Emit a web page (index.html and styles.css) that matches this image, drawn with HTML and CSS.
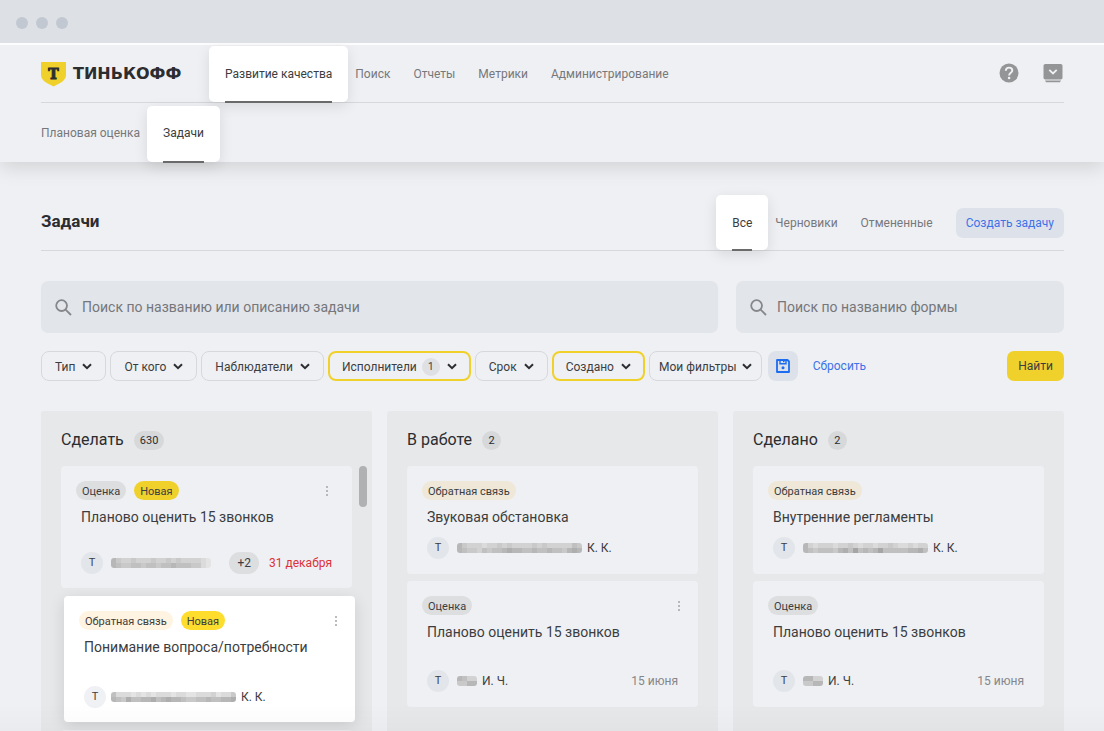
FILE: index.html
```html
<!DOCTYPE html>
<html lang="ru">
<head>
<meta charset="utf-8">
<title>Задачи</title>
<link rel="stylesheet" href="styles.css">
</head>
<body>
<svg class="sprite" aria-hidden="true">
  <symbol id="chevron" viewBox="0 0 10 7"><path d="M1 1.2 5 5.2 9 1.2" fill="none" stroke="currentColor" stroke-width="2"/></symbol>
  <symbol id="search" viewBox="0 0 17 17"><circle cx="6.6" cy="6.6" r="5.4" fill="none" stroke="currentColor" stroke-width="1.8"/><path d="M10.6 10.6 16 16" stroke="currentColor" stroke-width="1.8"/></symbol>
  <symbol id="more" viewBox="0 0 4 12"><g fill="currentColor"><circle cx="2" cy="2" r="1"/><circle cx="2" cy="6" r="1"/><circle cx="2" cy="10" r="1"/></g></symbol>
</svg>
<div class="window-bar"><span class="dot"></span><span class="dot"></span><span class="dot"></span></div>
<header class="header">
  <div class="header-row">
    <a class="logo" href="#">
      <svg class="shield" width="25" height="26" viewBox="0 0 25 26" aria-hidden="true"><path d="M0 1H25V14C25 19 20.5 21.500 12.500 25.500 4.500 21.500 0 19 0 14Z" fill="#f0d12c"/><text class="shield-letter" x="12.500" y="17.500" text-anchor="middle">Т</text></svg>
      <span class="logo-name">ТИНЬКОФФ</span>
    </a>
    <nav class="nav">
      <a class="tab tab-active" href="#">Развитие качества</a>
      <a class="tab" href="#">Поиск</a>
      <a class="tab" href="#">Отчеты</a>
      <a class="tab" href="#">Метрики</a>
      <a class="tab" href="#">Администрирование</a>
    </nav>
    <div class="header-actions">
      <button class="icon-button" type="button" aria-label="Помощь"><svg width="20" height="20" viewBox="0 0 20 20"><circle cx="10" cy="10" r="9.500" fill="#949596"/><path d="M6.800 7.800C6.900 5.700 8.300 4.600 10.100 4.600 12 4.600 13.300 5.800 13.300 7.400 13.300 9.700 10.100 9.800 10.100 12.400" fill="none" stroke="#f0f1f3" stroke-width="1.900"/><circle cx="10.100" cy="15" r="1.300" fill="#f0f1f3"/></svg></button>
      <button class="icon-button" type="button" aria-label="Меню"><svg width="20" height="20" viewBox="0 0 20 20"><rect x=".5" y="1" width="19" height="15.500" rx="1.800" fill="#949596"/><path d="M2 17.500H18L17 19.200H3Z" fill="#949596"/><path d="M6.300 6.900 10 10.500 13.700 6.900" fill="none" stroke="#f0f1f3" stroke-width="1.800"/></svg></button>
    </div>
  </div>
  <nav class="nav subnav">
    <a class="tab" href="#">Плановая оценка</a>
    <a class="tab tab-active" href="#">Задачи</a>
  </nav>
</header>
<main class="main">
  <div class="title-row">
    <h1 class="title">Задачи</h1>
    <nav class="nav">
      <a class="tab tab-active" href="#">Все</a>
      <a class="tab" href="#">Черновики</a>
      <a class="tab" href="#">Отмененные</a>
    </nav>
    <button class="button button-soft" type="button">Создать задачу</button>
  </div>
  <form class="search-row">
    <label class="search"><svg width="17" height="17"><use href="#search"/></svg><input type="text" aria-label="Поиск по названию или описанию задачи" placeholder="Поиск по названию или описанию задачи"></label>
    <label class="search"><svg width="17" height="17"><use href="#search"/></svg><input type="text" aria-label="Поиск по названию формы" placeholder="Поиск по названию формы"></label>
  </form>
  <div class="filters">
    <button class="filter" type="button">Тип<svg class="chevron"><use href="#chevron"/></svg></button>
    <button class="filter" type="button">От кого<svg class="chevron"><use href="#chevron"/></svg></button>
    <button class="filter" type="button">Наблюдатели<svg class="chevron"><use href="#chevron"/></svg></button>
    <button class="filter filter-set" type="button">Исполнители<span class="filter-count">1</span><svg class="chevron"><use href="#chevron"/></svg></button>
    <button class="filter" type="button">Срок<svg class="chevron"><use href="#chevron"/></svg></button>
    <button class="filter filter-set" type="button">Создано<svg class="chevron"><use href="#chevron"/></svg></button>
    <button class="filter filter-own" type="button">Мои фильтры<svg class="chevron"><use href="#chevron"/></svg></button>
    <button class="save" type="button" aria-label="Сохранить фильтр"><svg width="14" height="14" viewBox="0 0 14 14"><path d="M1 1H11.500L13 2.500V13H1Z" fill="none" stroke="#1b6cf0" stroke-width="1.800" stroke-linejoin="round"/><path d="M4 1V4.800H10V1" fill="none" stroke="#1b6cf0" stroke-width="1.400"/><rect x="7" y="1" width="1.500" height="2.200" fill="#1b6cf0"/><circle cx="7" cy="8.800" r="1.500" fill="#1b6cf0"/></svg></button>
    <button class="reset" type="button">Сбросить</button>
    <button class="button button-primary" type="submit">Найти</button>
  </div>
  <div class="board">
    <section class="column column-scroll">
      <h2 class="column-title">Сделать <span class="count">630</span></h2>
      <article class="card card-tall">
        <div class="tags"><span class="tag">Оценка</span><span class="tag tag-new">Новая</span><button class="more" type="button" aria-label="Действия"><svg width="4" height="12"><use href="#more"/></svg></button></div>
        <h3 class="card-title">Планово оценить 15 звонков</h3>
        <div class="person"><span class="avatar">Т</span><svg class="mask" data-rows="5788788878878788889a 5677667667665666779a"></svg><span class="extra">+2</span><span class="date date-late">31 декабря</span></div>
      </article>
      <article class="card card-tall card-raised">
        <div class="tags"><span class="tag tag-feedback">Обратная связь</span><span class="tag tag-new">Новая</span><button class="more" type="button" aria-label="Действия"><svg width="4" height="12"><use href="#more"/></svg></button></div>
        <h3 class="card-title">Понимание вопроса/потребности</h3>
        <div class="person"><span class="avatar">Т</span><svg class="mask" data-rows="6999a9a9a999a99aa9998a997 5674665546545567766566554"></svg><span>К. К.</span></div>
      </article>
      <article class="card card-tall"></article>
      <div class="scrollbar"></div>
    </section>
    <section class="column">
      <h2 class="column-title">В работе <span class="count">2</span></h2>
      <article class="card">
        <div class="tags"><span class="tag tag-feedback">Обратная связь</span></div>
        <h3 class="card-title">Звуковая обстановка</h3>
        <div class="person"><span class="avatar">Т</span><svg class="mask" data-rows="5788898878788887878888867 5677867665455665665667545"></svg><span>К. К.</span></div>
      </article>
      <article class="card card-tall">
        <div class="tags"><span class="tag">Оценка</span><button class="more" type="button" aria-label="Действия"><svg width="4" height="12"><use href="#more"/></svg></button></div>
        <h3 class="card-title">Планово оценить 15 звонков</h3>
        <div class="person"><span class="avatar">Т</span><svg class="mask" data-rows="5688 7755"></svg><span>И. Ч.</span><span class="date">15 июня</span></div>
      </article>
    </section>
    <section class="column">
      <h2 class="column-title">Сделано <span class="count">2</span></h2>
      <article class="card">
        <div class="tags"><span class="tag tag-feedback">Обратная связь</span></div>
        <h3 class="card-title">Внутренние регламенты</h3>
        <div class="person"><span class="avatar">Т</span><svg class="mask" data-rows="5898889887898898878998988 5676667546365653666665546"></svg><span>К. К.</span></div>
      </article>
      <article class="card card-tall">
        <div class="tags"><span class="tag">Оценка</span></div>
        <h3 class="card-title">Планово оценить 15 звонков</h3>
        <div class="person"><span class="avatar">Т</span><svg class="mask" data-rows="5588 7755"></svg><span>И. Ч.</span><span class="date">15 июня</span></div>
      </article>
    </section>
  </div>
</main>
<script src="mask.js"></script>
</body>
</html>
```
FILE: styles.css
```css
* { box-sizing: border-box; }
body { display: flex; flex-direction: column; margin: 0; height: 100vh; background: #eff0f3; color: #3c3d40; font: 12px/20px Roboto, "Liberation Sans", sans-serif; }
body::after { content: ""; position: fixed; left: 0; right: 0; bottom: 0; height: 28px; background: linear-gradient(rgba(0, 0, 0, 0), rgba(0, 0, 0, .02)); pointer-events: none; }
button, input { font: inherit; color: inherit; margin: 0; padding: 0; border: 0; background: none; }
button { cursor: pointer; white-space: nowrap; }
a { color: inherit; text-decoration: none; }
h1, h2, h3 { margin: 0; font-weight: 400; }
.sprite { display: none; }
.window-bar { position: relative; z-index: 1; display: flex; flex-shrink: 0; align-items: center; gap: 8px; height: 43px; padding: 3px 16px 0; background: #dde1e6; }
.dot { width: 12px; height: 12px; border-radius: 50%; background: #c1c8d1; }
.header { flex-shrink: 0; padding: 0 40px 0 41px; border-top: 2px solid #fdfdfe; box-shadow: 0 4px 20px rgba(0, 0, 0, .14); }
.header-row { display: flex; height: 58px; border-bottom: 1px solid #d7d8db; }
.logo { display: flex; align-items: center; gap: 7px; width: 184px; }
.logo-name { color: #2c2d30; font: bold 16px/20px "DejaVu Sans", sans-serif; }
.shield-letter { fill: #2c2d30; font: bold 14px "DejaVu Serif", serif; stroke: #2c2d30; }
.nav { display: flex; gap: 23px; color: #77787b; white-space: nowrap; }
.subnav { height: 59px; }
.tab { display: flex; align-items: center; }
.tab-active { position: relative; margin: 1px -16px 0; padding: 0 16px; border-radius: 5px; background: #fff; box-shadow: 0 4px 14px rgba(0, 0, 0, .1); color: #3c3d40; }
.subnav .tab-active { margin-top: 3px; padding-bottom: 3px; }
.tab-active::after { content: ""; position: absolute; left: 16px; right: 16px; bottom: -1px; height: 2px; background: #6a6a6b; }
.header-actions { display: flex; align-items: center; gap: 24px; margin-left: auto; padding: 0 1px 1px 0; }
.icon-button { display: flex; }
.main { display: flex; flex: 1; flex-direction: column; min-height: 0; padding: 33px 40px 0 41px; }
.title-row { display: flex; flex-shrink: 0; height: 56px; border-bottom: 1px solid #d7d8db; }
.title { align-self: center; margin-right: auto; padding-bottom: 3px; color: #2c2d30; font-size: 17px; line-height: 24px; font-weight: 700; }
.title-row .tab-active { margin-top: 0; }
.title-row .button { align-self: center; margin-left: 23px; padding: 0 10px; }
.button { height: 30px; padding: 0 11px; border-radius: 7px; }
.button-soft { background: #dde2ea; color: #3d73e8; }
.button-primary { margin-left: auto; background: #f0d12c; }
.search-row { display: grid; grid-template-columns: 677fr 328fr; gap: 18px; margin-top: 30px; }
.search { display: flex; align-items: center; gap: 10px; height: 52px; padding: 0 14px; border-radius: 7px; background: #e2e5ea; color: #85878a; }
.search input { flex: 1; min-width: 0; font-size: 14px; outline: 0; }
.search input::placeholder { color: #75777b; opacity: 1; }
.filters { display: flex; gap: 4px; margin-top: 18px; }
.filter { display: flex; align-items: center; gap: 7px; height: 30px; padding: 1px 13px 0; border: 1px solid #d7d8db; border-radius: 8px; }
.filter-set { padding: 1px 12px 0; border: 2px solid #f0d12c; }
.filter-own { padding: 1px 9px 0; gap: 5px; }
.chevron { width: 10px; height: 7px; color: #2c2d30; }
.filter-count { width: 18px; height: 18px; margin-left: -2px; border-radius: 50%; background: #dfe0e3; font-size: 10px; line-height: 18px; text-align: center; }
.save { display: flex; align-items: center; justify-content: center; width: 30px; height: 30px; margin-left: 2px; border-radius: 8px; background: #dde2ea; }
.reset { margin-left: 11px; color: #3d73e8; }
.board { display: grid; flex: 1; grid-template-columns: repeat(3, 1fr); grid-template-rows: minmax(0, 1fr); gap: 15px; min-height: 0; margin-top: 30px; }
.column { position: relative; overflow: auto; scrollbar-width: none; padding: 17px 20px 0; border-radius: 3px 3px 0 0; background: #e7e8ea; }
.column-title { display: flex; align-items: center; gap: 10px; height: 24px; margin-bottom: 14px; font-size: 16px; color: #2c2d30; }
.count { min-width: 19px; height: 19px; padding: 0 6px; border-radius: 10px; background: #d7d8da; font-size: 11px; line-height: 20px; text-align: center; }
.card { display: flex; flex-direction: column; height: 108px; margin-bottom: 7px; padding: 15px 20px; border-radius: 4px; background: #eff0f3; }
.card-tall { height: 126px; }
.column-scroll .card { height: 122px; margin-bottom: 8px; padding-bottom: 14px; }
.column-scroll .card-raised { position: relative; left: 3px; height: 126px; background: #fff; box-shadow: 0 4px 16px rgba(0, 0, 0, .12); }
.tags { display: flex; gap: 8px; margin: 0 0 7px -5px; }
.tag { height: 19px; padding: 0 6px; border-radius: 10px; background: #dddee0; font-size: 11px; line-height: 21px; }
.tag-new { background: #f0d12c; }
.tag-feedback { background: #efe7d7; }
.card-raised .tag-new { background: #ffdd2d; }
.card-raised .tag-feedback { background: #fff4e1; }
.more { display: flex; align-items: center; margin: 0 -3px 0 auto; color: #a5a6a8; }
.column-scroll .card:not(.card-raised) .more { margin-right: 3px; }
.card-title { font-size: 14px; line-height: 20px; }
.person { display: flex; align-items: center; gap: 5px; height: 22px; margin-top: auto; }
.avatar { width: 22px; height: 22px; margin-right: 3px; border-radius: 50%; background: #e2e5ea; font-size: 11px; line-height: 22px; text-align: center; }
.card-raised .avatar { margin-right: 0; background: #eff1f5; }
.mask { height: 10px; border-radius: 3px; }
.extra { height: 22px; margin-left: auto; padding: 0 8px; border-radius: 11px; background: #dddee0; line-height: 22px; }
.date { margin-left: auto; color: #85868a; }
.date-late { margin-left: 5px; color: #dc3237; }
.scrollbar { position: absolute; top: 55px; right: 5px; width: 8px; height: 41px; border-radius: 4px; background: #b0b1b3; }
```
FILE: mask.js
```js
// Draws hidden names as rows of grey cells; each hex digit is one cell's shade.
document.querySelectorAll(".mask").forEach((svg) => {
  const rows = svg.dataset.rows.split(" ");
  svg.setAttribute("width", rows[0].length * 5);
  rows.forEach((row, y) => {
    [...row].forEach((digit, x) => {
      const cell = document.createElementNS("http://www.w3.org/2000/svg", "rect");
      const shade = 138 + parseInt(digit, 16) * 9;
      cell.setAttribute("x", x * 5);
      cell.setAttribute("y", y * 5);
      cell.setAttribute("width", 5);
      cell.setAttribute("height", 5);
      cell.setAttribute("fill", `rgb(${shade},${shade},${shade})`);
      svg.append(cell);
    });
  });
});
```
